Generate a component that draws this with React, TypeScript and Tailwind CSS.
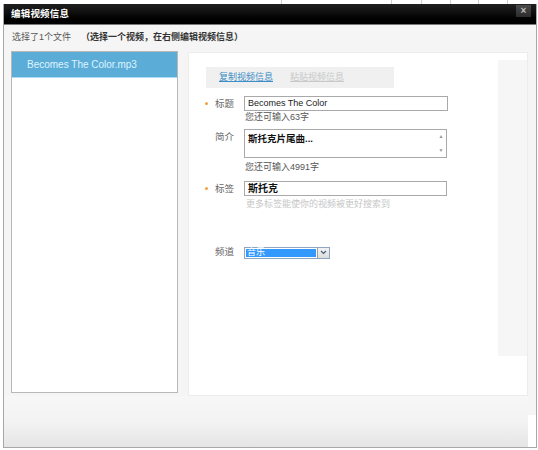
import React from "react";

const font = { fontFamily: '"Liberation Sans", "Noto Sans CJK SC", sans-serif' };

function Label({ req, text }: { req?: boolean; text: string }) {
  return (
    <div className="w-[55px] shrink-0 flex items-center pl-[16px] h-[15px]">
      <div className="w-[10px] flex items-center">
        {req && <div className="w-[3px] h-[3px] rounded-full bg-[#f0a040]" />}
      </div>
      <span className="text-[9.5px] text-[#666] leading-none">{text}</span>
    </div>
  );
}

export default function App() {
  return (
    <div className="w-[538px] h-[450px] bg-white overflow-hidden" style={font}>
      {/* background page lines above the dialog */}
      <div className="h-[4px] flex">
        <div className="w-[282px] border-r border-[#d0d0d0]" />
        <div className="w-[110px] border-r border-[#d0d0d0]" />
        <div className="w-[30px] border-r border-[#d0d0d0]" />
        <div className="w-[29px] border-r border-[#d0d0d0]" />
        <div className="w-[28px] border-r border-[#d0d0d0]" />
        <div className="w-[29px] border-r border-[#d0d0d0]" />
      </div>

      {/* window */}
      <div className="ml-[3px] w-[534px] border-x border-b border-[#a8a8a8] bg-[#f5f5f5] flex flex-col">
        {/* title bar */}
        <div className="h-[20px] bg-gradient-to-b from-[#202020] via-[#0c0c0c] to-black border-b border-[#7a7a7a] flex items-center justify-between pl-[7px] pr-[5px] box-content">
          <span className="text-[9.5px] font-bold text-white tracking-[0.2px]">编辑视频信息</span>
          <div className="w-[15px] h-[12px] -mt-[7px] bg-gradient-to-b from-[#4a4a4a] to-[#2c2c2c] flex items-center justify-center text-[#bdbdbd] text-[10px] leading-none font-bold">
            ×
          </div>
        </div>

        {/* selection info */}
        <div className="h-[26px] flex items-center pl-[8px] text-[9px]">
          <span className="text-[#555]">选择了1个文件</span>
          <span className="ml-[10px] text-[#333] font-bold">（选择一个视频，在右侧编辑视频信息）</span>
        </div>

        {/* panels */}
        <div className="h-[345px] flex pl-[7px] gap-[10px]">
          <div className="w-[167px] h-[342px] border border-[#b8b8b8] bg-white">
            <div className="h-[26px] bg-[#5badd8] border-b border-[#a8dcf2] flex items-center pl-[15px]">
              <span className="text-[10px] text-[#dff4ff]">Becomes The Color.mp3</span>
            </div>
          </div>

          <div className="w-[340px] h-[344px] mt-[1px] border border-[#ececec] bg-white flex">
            <div className="flex-1 flex flex-col">
              {/* tabs */}
              <div className="ml-[17px] mt-[14px] w-[188px] h-[21px] bg-[#f0f0f0] flex items-center pl-[13px] gap-[17px] text-[9px]">
                <span className="text-[#3d8ec6] underline">复制视频信息</span>
                <span className="text-[#c9c9c9] underline">粘贴视频信息</span>
              </div>

              {/* title */}
              <div className="flex mt-[8px]">
                <Label req text="标题" />
                <div className="w-[204px] h-[15px] border border-[#a9a9a9] flex items-center pl-[3px] text-[9px] text-[#222]">
                  Becomes The Color
                </div>
              </div>
              <div className="ml-[56px] h-[12px] mt-[1px] flex items-center text-[9px] text-[#555]">您还可输入63字</div>

              {/* intro */}
              <div className="flex mt-[5px]">
                <div className="pt-[-1px]">
                  <Label text="简介" />
                </div>
                <div className="w-[203px] h-[29px] border border-[#a9a9a9] flex justify-between">
                  <span className="pl-[3px] pt-[2px] text-[9.5px] text-[#111] font-bold">斯托克片尾曲...</span>
                  <div className="w-[10px] flex flex-col justify-between items-center py-[4px] text-[5px] text-[#999] leading-none">
                    <span>▲</span>
                    <span>▼</span>
                  </div>
                </div>
              </div>
              <div className="ml-[56px] h-[12px] mt-[4px] flex items-center text-[9px] text-[#555]">您还可输入4991字</div>

              {/* tags */}
              <div className="flex mt-[7px]">
                <Label req text="标签" />
                <div className="w-[203px] h-[15px] border border-[#a9a9a9] flex items-center pl-[3px] text-[10px] font-bold text-[#111]">
                  斯托克
                </div>
              </div>
              <div className="ml-[57px] h-[12px] mt-[3px] flex items-center text-[9px] text-[#c6c6c6]">更多标签能使你的视频被更好搜索到</div>

              {/* channel */}
              <div className="flex mt-[35px] items-center">
                <div className="-mt-[2px]">
                  <Label text="频道" />
                </div>
                <div className="w-[86px] h-[12px] border border-[#8ea6c4] bg-white flex">
                  <div className="flex-1 m-[1px] bg-[#3399ff] flex items-center pl-[1px] text-[9px] text-white leading-none">音乐</div>
                  <div className="w-[12px] bg-gradient-to-b from-[#f4f4f4] to-[#dcdcdc] border-l border-[#a0a0a0] flex items-center justify-center">
                    <svg width="7" height="5" viewBox="0 0 7 5">
                      <path d="M1 1 L3.5 3.5 L6 1" stroke="#4a5a78" strokeWidth="1.2" fill="none" />
                    </svg>
                  </div>
                </div>
              </div>
            </div>
            <div className="w-[29px] mt-[7px] h-[296px] bg-[#f6f6f6]" />
          </div>
        </div>

        {/* footer */}
        <div className="h-[51px] flex">
          <div className="w-[524px] bg-gradient-to-b from-[#f7f7f7] via-[#f3f3f3] to-[#e5e5e5]" />
          <div className="flex-1 flex flex-col">
            <div className="h-[19px] bg-[#f5f5f5]" />
            <div className="flex-1 bg-white" />
          </div>
        </div>
      </div>
    </div>
  );
}
